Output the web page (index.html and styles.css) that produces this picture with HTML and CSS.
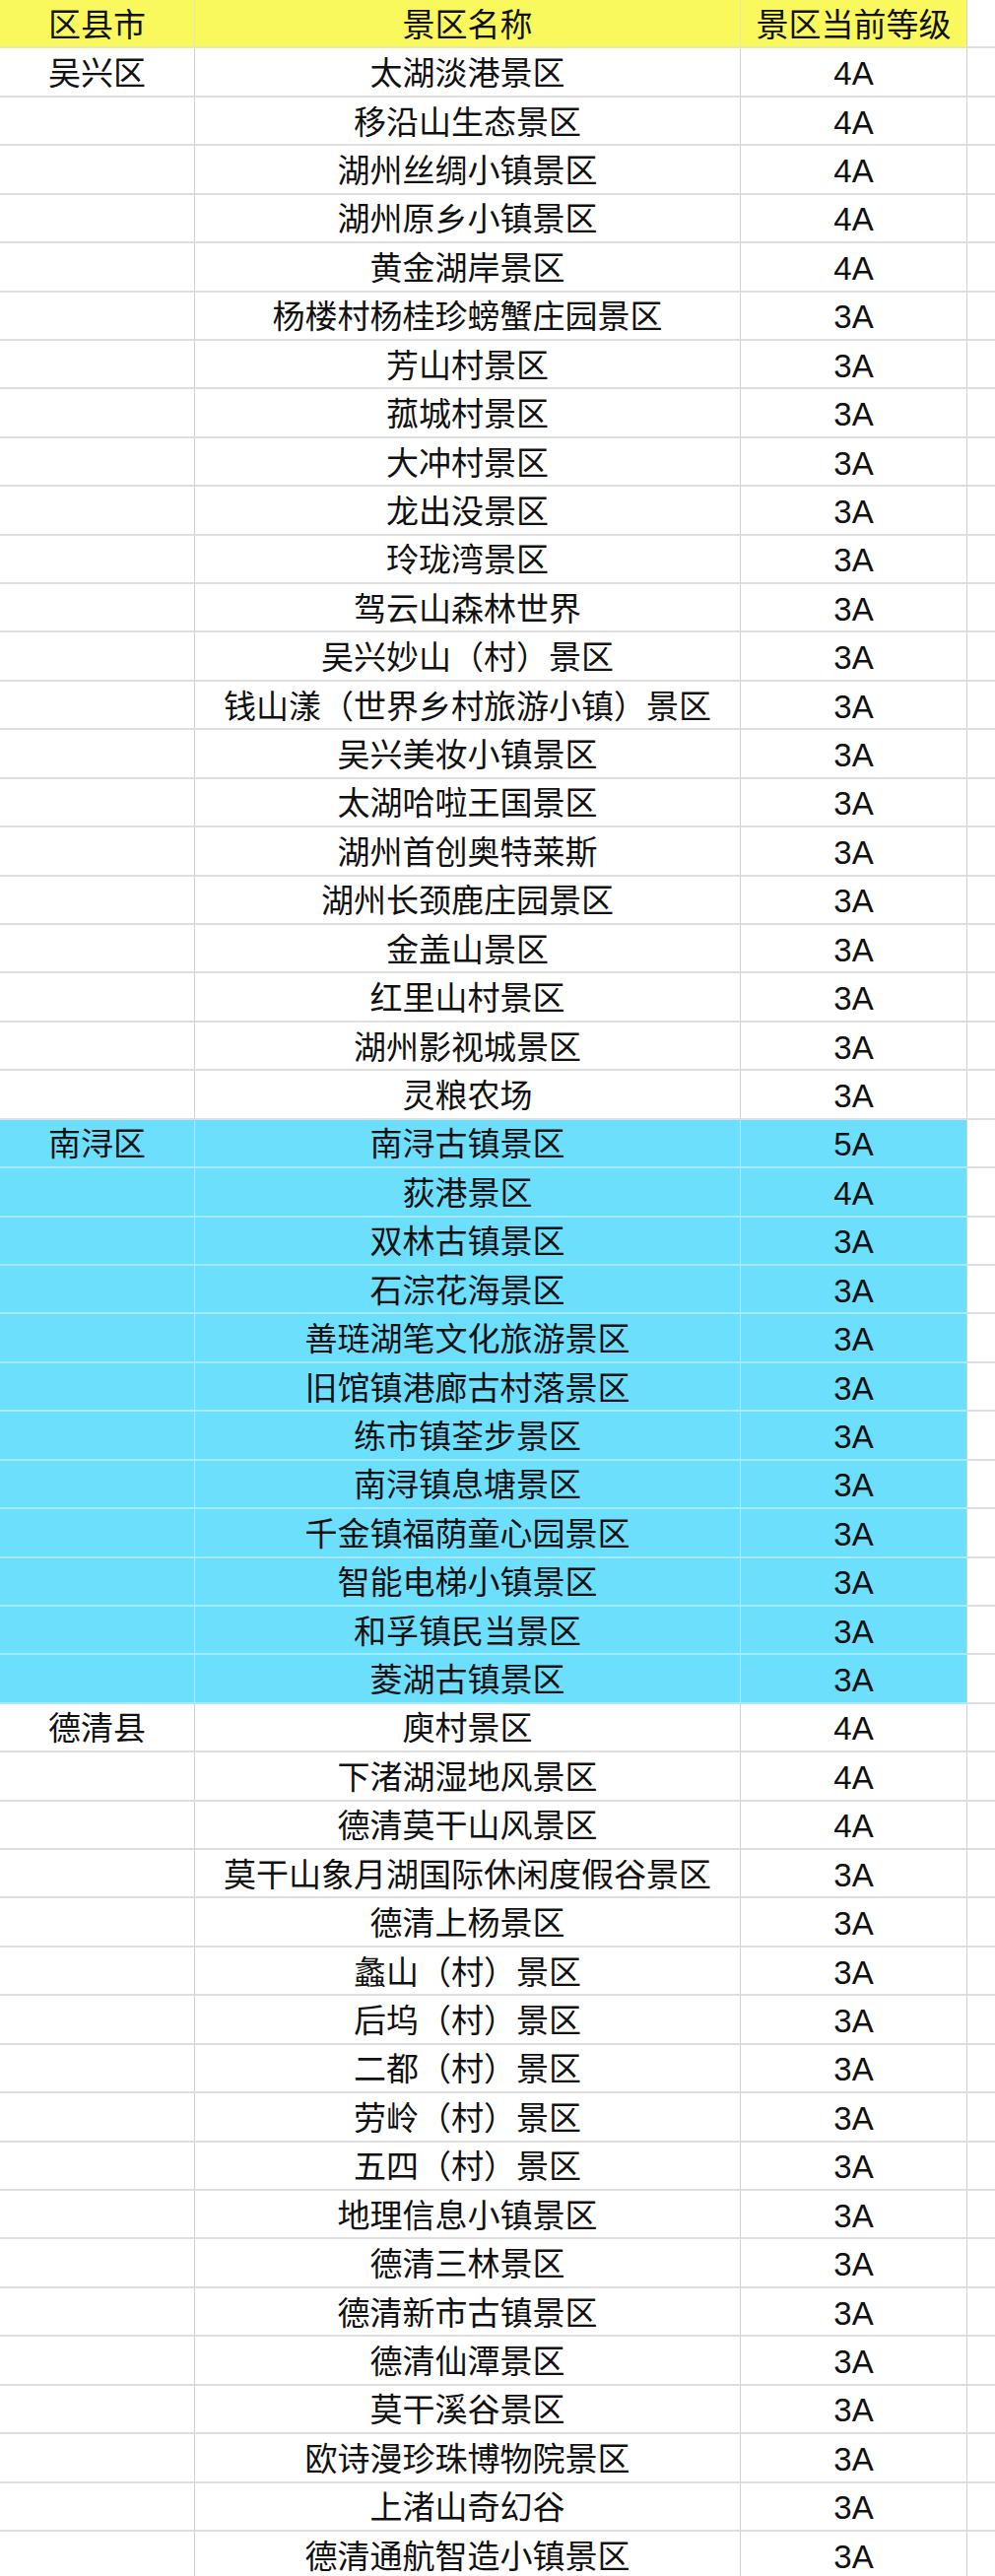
FILE: index.html
```html
<!DOCTYPE html>
<html lang="zh">
<head>
<meta charset="utf-8">
<title>湖州景区等级</title>
<link rel="stylesheet" href="styles.css">
</head>
<body>
<div class="sheet">
  <div class="row head"><div class="c c1">区县市</div><div class="c c2">景区名称</div><div class="c c3">景区当前等级</div><div class="c c4"></div></div>

  <div class="row"><div class="c c1">吴兴区</div><div class="c c2">太湖淡港景区</div><div class="c c3">4A</div><div class="c c4"></div></div>
  <div class="row"><div class="c c1"></div><div class="c c2">移沿山生态景区</div><div class="c c3">4A</div><div class="c c4"></div></div>
  <div class="row"><div class="c c1"></div><div class="c c2">湖州丝绸小镇景区</div><div class="c c3">4A</div><div class="c c4"></div></div>
  <div class="row"><div class="c c1"></div><div class="c c2">湖州原乡小镇景区</div><div class="c c3">4A</div><div class="c c4"></div></div>
  <div class="row"><div class="c c1"></div><div class="c c2">黄金湖岸景区</div><div class="c c3">4A</div><div class="c c4"></div></div>
  <div class="row"><div class="c c1"></div><div class="c c2">杨楼村杨桂珍螃蟹庄园景区</div><div class="c c3">3A</div><div class="c c4"></div></div>
  <div class="row"><div class="c c1"></div><div class="c c2">芳山村景区</div><div class="c c3">3A</div><div class="c c4"></div></div>
  <div class="row"><div class="c c1"></div><div class="c c2">菰城村景区</div><div class="c c3">3A</div><div class="c c4"></div></div>
  <div class="row"><div class="c c1"></div><div class="c c2">大冲村景区</div><div class="c c3">3A</div><div class="c c4"></div></div>
  <div class="row"><div class="c c1"></div><div class="c c2">龙出没景区</div><div class="c c3">3A</div><div class="c c4"></div></div>
  <div class="row"><div class="c c1"></div><div class="c c2">玲珑湾景区</div><div class="c c3">3A</div><div class="c c4"></div></div>
  <div class="row"><div class="c c1"></div><div class="c c2">驾云山森林世界</div><div class="c c3">3A</div><div class="c c4"></div></div>
  <div class="row"><div class="c c1"></div><div class="c c2">吴兴妙山（村）景区</div><div class="c c3">3A</div><div class="c c4"></div></div>
  <div class="row"><div class="c c1"></div><div class="c c2">钱山漾（世界乡村旅游小镇）景区</div><div class="c c3">3A</div><div class="c c4"></div></div>
  <div class="row"><div class="c c1"></div><div class="c c2">吴兴美妆小镇景区</div><div class="c c3">3A</div><div class="c c4"></div></div>
  <div class="row"><div class="c c1"></div><div class="c c2">太湖哈啦王国景区</div><div class="c c3">3A</div><div class="c c4"></div></div>
  <div class="row"><div class="c c1"></div><div class="c c2">湖州首创奥特莱斯</div><div class="c c3">3A</div><div class="c c4"></div></div>
  <div class="row"><div class="c c1"></div><div class="c c2">湖州长颈鹿庄园景区</div><div class="c c3">3A</div><div class="c c4"></div></div>
  <div class="row"><div class="c c1"></div><div class="c c2">金盖山景区</div><div class="c c3">3A</div><div class="c c4"></div></div>
  <div class="row"><div class="c c1"></div><div class="c c2">红里山村景区</div><div class="c c3">3A</div><div class="c c4"></div></div>
  <div class="row"><div class="c c1"></div><div class="c c2">湖州影视城景区</div><div class="c c3">3A</div><div class="c c4"></div></div>
  <div class="row"><div class="c c1"></div><div class="c c2">灵粮农场</div><div class="c c3">3A</div><div class="c c4"></div></div>

  <div class="row blue"><div class="c c1">南浔区</div><div class="c c2">南浔古镇景区</div><div class="c c3">5A</div><div class="c c4"></div></div>
  <div class="row blue"><div class="c c1"></div><div class="c c2">荻港景区</div><div class="c c3">4A</div><div class="c c4"></div></div>
  <div class="row blue"><div class="c c1"></div><div class="c c2">双林古镇景区</div><div class="c c3">3A</div><div class="c c4"></div></div>
  <div class="row blue"><div class="c c1"></div><div class="c c2">石淙花海景区</div><div class="c c3">3A</div><div class="c c4"></div></div>
  <div class="row blue"><div class="c c1"></div><div class="c c2">善琏湖笔文化旅游景区</div><div class="c c3">3A</div><div class="c c4"></div></div>
  <div class="row blue"><div class="c c1"></div><div class="c c2">旧馆镇港廊古村落景区</div><div class="c c3">3A</div><div class="c c4"></div></div>
  <div class="row blue"><div class="c c1"></div><div class="c c2">练市镇荃步景区</div><div class="c c3">3A</div><div class="c c4"></div></div>
  <div class="row blue"><div class="c c1"></div><div class="c c2">南浔镇息塘景区</div><div class="c c3">3A</div><div class="c c4"></div></div>
  <div class="row blue"><div class="c c1"></div><div class="c c2">千金镇福荫童心园景区</div><div class="c c3">3A</div><div class="c c4"></div></div>
  <div class="row blue"><div class="c c1"></div><div class="c c2">智能电梯小镇景区</div><div class="c c3">3A</div><div class="c c4"></div></div>
  <div class="row blue"><div class="c c1"></div><div class="c c2">和孚镇民当景区</div><div class="c c3">3A</div><div class="c c4"></div></div>
  <div class="row blue"><div class="c c1"></div><div class="c c2">菱湖古镇景区</div><div class="c c3">3A</div><div class="c c4"></div></div>

  <div class="row"><div class="c c1">德清县</div><div class="c c2">庾村景区</div><div class="c c3">4A</div><div class="c c4"></div></div>
  <div class="row"><div class="c c1"></div><div class="c c2">下渚湖湿地风景区</div><div class="c c3">4A</div><div class="c c4"></div></div>
  <div class="row"><div class="c c1"></div><div class="c c2">德清莫干山风景区</div><div class="c c3">4A</div><div class="c c4"></div></div>
  <div class="row"><div class="c c1"></div><div class="c c2">莫干山象月湖国际休闲度假谷景区</div><div class="c c3">3A</div><div class="c c4"></div></div>
  <div class="row"><div class="c c1"></div><div class="c c2">德清上杨景区</div><div class="c c3">3A</div><div class="c c4"></div></div>
  <div class="row"><div class="c c1"></div><div class="c c2">蠡山（村）景区</div><div class="c c3">3A</div><div class="c c4"></div></div>
  <div class="row"><div class="c c1"></div><div class="c c2">后坞（村）景区</div><div class="c c3">3A</div><div class="c c4"></div></div>
  <div class="row"><div class="c c1"></div><div class="c c2">二都（村）景区</div><div class="c c3">3A</div><div class="c c4"></div></div>
  <div class="row"><div class="c c1"></div><div class="c c2">劳岭（村）景区</div><div class="c c3">3A</div><div class="c c4"></div></div>
  <div class="row"><div class="c c1"></div><div class="c c2">五四（村）景区</div><div class="c c3">3A</div><div class="c c4"></div></div>
  <div class="row"><div class="c c1"></div><div class="c c2">地理信息小镇景区</div><div class="c c3">3A</div><div class="c c4"></div></div>
  <div class="row"><div class="c c1"></div><div class="c c2">德清三林景区</div><div class="c c3">3A</div><div class="c c4"></div></div>
  <div class="row"><div class="c c1"></div><div class="c c2">德清新市古镇景区</div><div class="c c3">3A</div><div class="c c4"></div></div>
  <div class="row"><div class="c c1"></div><div class="c c2">德清仙潭景区</div><div class="c c3">3A</div><div class="c c4"></div></div>
  <div class="row"><div class="c c1"></div><div class="c c2">莫干溪谷景区</div><div class="c c3">3A</div><div class="c c4"></div></div>
  <div class="row"><div class="c c1"></div><div class="c c2">欧诗漫珍珠博物院景区</div><div class="c c3">3A</div><div class="c c4"></div></div>
  <div class="row"><div class="c c1"></div><div class="c c2">上渚山奇幻谷</div><div class="c c3">3A</div><div class="c c4"></div></div>
  <div class="row"><div class="c c1"></div><div class="c c2">德清通航智造小镇景区</div><div class="c c3">3A</div><div class="c c4"></div></div>
</div>
</body>
</html>
```

FILE: styles.css
```css
html, body {
  margin: 0;
  padding: 0;
  background: #ffffff;
}

body {
  font-family: "Liberation Sans", "Noto Sans CJK SC", sans-serif;
  font-size: 33px;
  color: #111111;
  width: 1010px;
  overflow: hidden;
}

.sheet {
  display: flex;
  flex-direction: column;
}

.row {
  display: grid;
  grid-template-columns: 198px 554px 230px 1fr;
  height: 49.43px;
}

.c {
  box-sizing: border-box;
  display: flex;
  align-items: center;
  justify-content: center;
  white-space: nowrap;
  border-bottom: 2px solid #dedede;
  border-right: 1px solid #d2d2d2;
  line-height: 1;
  padding-top: 3px;
}

.c4 {
  border-right: none;
}

.head .c1,
.head .c2,
.head .c3 {
  background: #f9f95e;
  border-bottom-color: #ececa0;
  border-right-color: #e6e6b8;
}

.blue .c1,
.blue .c2,
.blue .c3 {
  background: #6cdffd;
  border-bottom-color: #a4ebfd;
  border-right-color: #a4ebfd;
}

.blue .c3 {
  border-right-color: #d2d2d2;
}

.head .c3 {
  border-right-color: #d2d2d2;
}
```
